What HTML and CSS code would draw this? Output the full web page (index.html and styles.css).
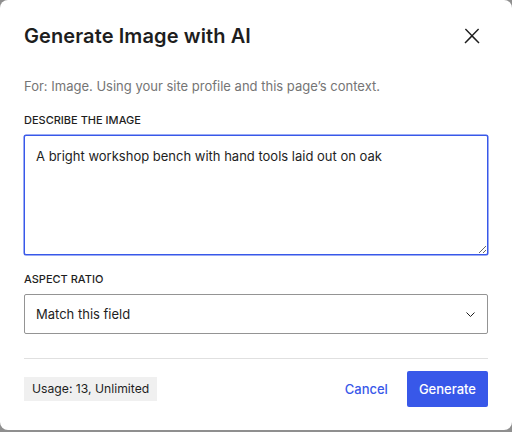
FILE: index.html
```html
<!DOCTYPE html>
<html lang="en">

<head>
    <meta charset="UTF-8">
    <meta name="viewport" content="width=device-width, initial-scale=1.0">
    <title>Generate Image with AI</title>
    <link rel="stylesheet" href="styles.css">
</head>

<body>
    <div class="modal">
        <div class="modal-header">
            <h1 class="modal-title">Generate Image with AI</h1>
            <button class="close-btn" aria-label="Close">
                <svg width="24" height="24" viewBox="0 0 24 24">
                    <path d="M13 11.8l6.1-6.3-1-1-6.1 6.2-6.1-6.2-1 1 6.1 6.3-6.5 6.7 1 1 6.5-6.6 6.5 6.6 1-1z" fill="#1e1e1e"></path>
                </svg>
            </button>
        </div>
        <div class="modal-content">
            <p class="modal-intro">For: Image. Using your site profile and this page’s context.</p>

            <label class="field-label" for="prompt">Describe the image</label>
            <textarea id="prompt" class="prompt-input">A bright workshop bench with hand tools laid out on oak</textarea>

            <label class="field-label" for="ratio">Aspect ratio</label>
            <div class="select-wrap">
                <select id="ratio" class="ratio-select">
                    <option>Match this field</option>
                    <option>Square (1:1)</option>
                    <option>Landscape (16:9)</option>
                    <option>Portrait (9:16)</option>
                </select>
                <svg class="select-arrow" width="9" height="5" viewBox="0 0 9 5">
                    <path d="M0.5 0.5l4 4 4-4" fill="none" stroke="#1e1e1e" stroke-width="1"></path>
                </svg>
            </div>

            <div class="modal-footer">
                <span class="usage">Usage: 13, Unlimited</span>
                <div class="actions">
                    <button class="btn-link">Cancel</button>
                    <button class="btn-primary">Generate</button>
                </div>
            </div>
        </div>
    </div>
</body>

</html>
```

FILE: styles.css
```css
body {
    margin: 0;
    background: #8f8f8f;
    font-family: Inter, "Noto Sans", sans-serif;
    color: #1e1e1e;
}

.modal {
    width: 512px;
    height: 430px;
    background: #fff;
    border-radius: 8px;
    box-sizing: border-box;
}

.modal-header {
    display: flex;
    justify-content: space-between;
    align-items: center;
    height: 72px;
    padding: 0 24px;
}

.modal-title {
    margin: 0;
    font-size: 20px;
    font-weight: 600;
    letter-spacing: 0.1px;
}

.close-btn {
    display: flex;
    align-items: center;
    justify-content: center;
    width: 32px;
    height: 32px;
    padding: 0;
    border: none;
    background: none;
    cursor: pointer;
}

.modal-content {
    padding: 4px 24px 0;
    display: flex;
    flex-direction: column;
}

.modal-intro {
    margin: 0 0 16px;
    font-size: 13px;
    line-height: 20px;
    color: #757575;
}

.field-label {
    font-size: 11px;
    line-height: 16px;
    font-weight: 500;
    text-transform: uppercase;
    margin-bottom: 7px;
}

.prompt-input {
    height: 120px;
    box-sizing: border-box;
    padding: 10px 11px;
    margin-bottom: 16px;
    border: 1px solid #3858e9;
    border-radius: 2px;
    box-shadow: 0 0 0 0.5px #3858e9;
    font-family: inherit;
    font-size: 13px;
    line-height: 20px;
    color: #1e1e1e;
    outline: none;
}

.select-wrap {
    position: relative;
}

.ratio-select {
    width: 100%;
    height: 40px;
    box-sizing: border-box;
    padding: 0 32px 0 11px;
    border: 1px solid #949494;
    border-radius: 2px;
    background: #fff;
    font-family: inherit;
    font-size: 13px;
    color: #1e1e1e;
    appearance: none;
}

.select-arrow {
    position: absolute;
    right: 13px;
    top: 18px;
    pointer-events: none;
}

.modal-footer {
    display: flex;
    justify-content: space-between;
    align-items: center;
    margin-top: 24px;
    padding-top: 12px;
    border-top: 1px solid #e0e0e0;
}

.usage {
    background: #f0f0f0;
    padding: 0 8px;
    height: 24px;
    line-height: 24px;
    font-size: 12.2px;
}

.actions {
    display: flex;
    align-items: center;
    gap: 19px;
}

.btn-link {
    border: none;
    background: none;
    padding: 0;
    font-family: inherit;
    font-size: 13px;
    font-weight: 500;
    color: #3858e9;
    cursor: pointer;
}

.btn-primary {
    height: 36px;
    padding: 0 12px;
    border: none;
    border-radius: 2px;
    background: #3858e9;
    color: #fff;
    font-family: inherit;
    font-size: 13px;
    font-weight: 500;
    cursor: pointer;
}
```
